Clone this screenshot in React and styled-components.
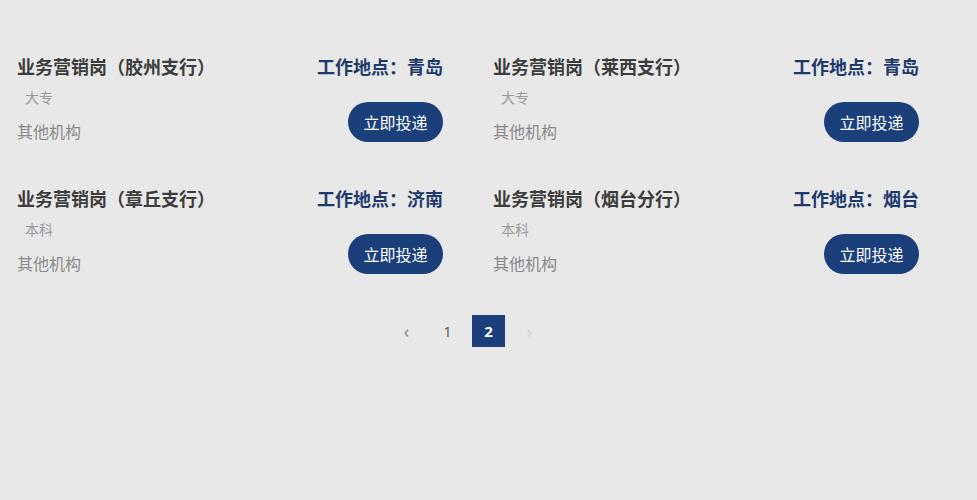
import React from 'react'
import styled, { createGlobalStyle } from 'styled-components'

const GlobalStyle = createGlobalStyle`
  html, body {
    margin: 0;
    padding: 0;
    background: #e8e8e8;
    font-family: "Noto Sans CJK SC", "Noto Sans", sans-serif;
  }
`

const jobs = [
  { title: '业务营销岗（胶州支行）', city: '青岛', edu: '大专' },
  { title: '业务营销岗（莱西支行）', city: '青岛', edu: '大专' },
  { title: '业务营销岗（章丘支行）', city: '济南', edu: '本科' },
  { title: '业务营销岗（烟台分行）', city: '烟台', edu: '本科' },
]

export default function App() {
  return (
    <Page>
      <GlobalStyle />
      <Content>
        <Grid>
          {jobs.map((job, i) => (
            <Card key={i}>
              <Info>
                <Title>{job.title}</Title>
                <Edu>{job.edu}</Edu>
                <Org>其他机构</Org>
              </Info>
              <Side>
                <Place>工作地点：{job.city}</Place>
                <Apply>立即投递</Apply>
              </Side>
            </Card>
          ))}
        </Grid>
        <Pager>
          <PageItem $muted>‹</PageItem>
          <PageItem>1</PageItem>
          <PageItem $active>2</PageItem>
          <PageItem $disabled>›</PageItem>
        </Pager>
      </Content>
    </Page>
  )
}

const Page = styled.div`
  width: 977px;
  height: 500px;
  padding: 54px 0 0 17px;
  box-sizing: border-box;
`

const Content = styled.div`
  width: 902px;
`

const Grid = styled.div`
  display: grid;
  grid-template-columns: 426px 426px;
  column-gap: 50px;
  row-gap: 43px;
`

const Card = styled.div`
  display: flex;
  justify-content: space-between;
  height: 89px;
`

const Info = styled.div`
  display: flex;
  flex-direction: column;
`

const Title = styled.div`
  font-size: 18px;
  line-height: 24px;
  font-weight: 700;
  color: #3c3c3c;
`

const Edu = styled.div`
  margin-top: 8px;
  padding-left: 8px;
  font-size: 14px;
  line-height: 22px;
  color: #9a9a9a;
`

const Org = styled.div`
  margin-top: 12px;
  font-size: 16px;
  line-height: 22px;
  color: #8a8a8a;
`

const Side = styled.div`
  display: flex;
  flex-direction: column;
  align-items: flex-end;
`

const Place = styled.div`
  font-size: 18px;
  line-height: 24px;
  font-weight: 700;
  color: #1d3a6c;
`

const Apply = styled.button`
  margin-top: 24px;
  width: 95px;
  height: 40px;
  border: none;
  border-radius: 20px;
  background: #1b3f7b;
  color: #fff;
  font-family: inherit;
  font-size: 16px;
  padding: 0;
  cursor: pointer;
`

const Pager = styled.div`
  display: flex;
  justify-content: center;
  gap: 8px;
  margin-top: 40px;
`

const PageItem = styled.div`
  width: 33px;
  height: 32px;
  display: flex;
  align-items: center;
  justify-content: center;
  font-family: "Open Sans", "Noto Sans", sans-serif;
  font-size: ${p => (p.$muted || p.$disabled ? '18px' : '15px')};
  font-weight: ${p => (p.$active ? 700 : 400)};
  color: ${p => (p.$active ? '#fff' : p.$disabled ? '#d0d0d0' : p.$muted ? '#888' : '#555')};
  background: ${p => (p.$active ? '#1b3f7b' : 'transparent')};
`
